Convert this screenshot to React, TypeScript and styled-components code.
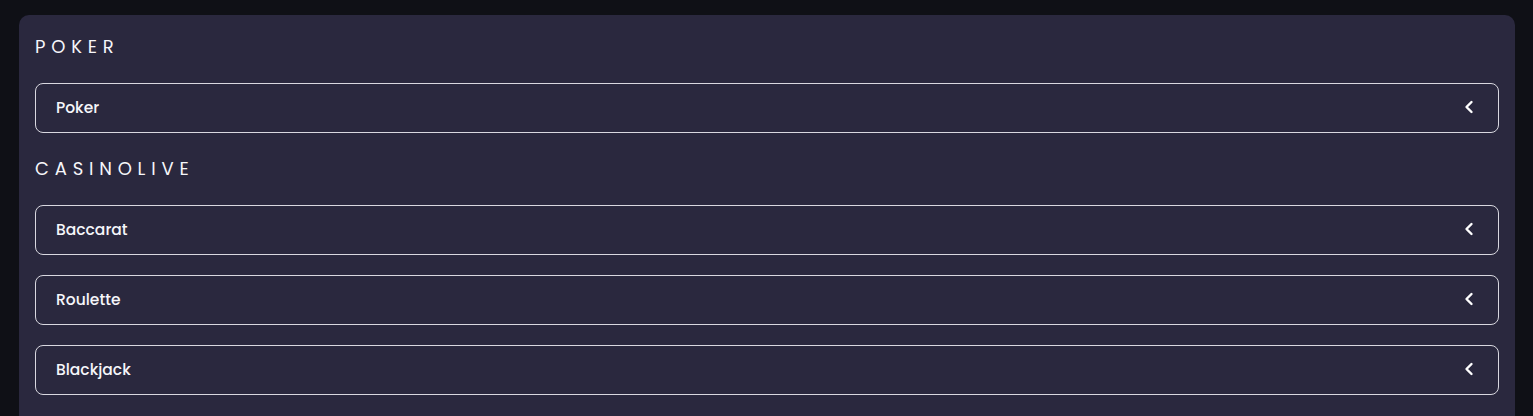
import React from 'react'
import styled, { createGlobalStyle } from 'styled-components'

const GlobalStyle = createGlobalStyle`
  html, body {
    margin: 0;
    padding: 0;
    background: #0f1016;
    font-family: Poppins, Inter, "Noto Sans", sans-serif;
    color: #ffffff;
  }
`

const Page = styled.div`
  padding: 15px 18px 0 19px;
  height: 416px;
  box-sizing: border-box;
  overflow: hidden;
`

const Card = styled.div`
  background: #2a283e;
  border-radius: 10px;
  padding: 21px 16px 40px 16px;
  display: flex;
  flex-direction: column;
`

const SectionTitle = styled.h2`
  margin: 0 0 25px 0;
  font-size: 18px;
  font-weight: 400;
  letter-spacing: 5.8px;
  line-height: 22px;
  text-transform: uppercase;
  color: #f6f6fa;
`

const List = styled.div`
  display: flex;
  flex-direction: column;
  gap: 20px;
  margin-bottom: 25px;
`

const Row = styled.button`
  height: 50px;
  box-sizing: border-box;
  border: 1px solid #d9d8e0;
  border-radius: 8px;
  background: transparent;
  color: #f6f6fa;
  display: flex;
  align-items: center;
  justify-content: space-between;
  padding: 0 24px 2px 20px;
  font-family: inherit;
  font-size: 15.5px;
  font-weight: 500;
  cursor: pointer;
  text-align: left;
`

const Chevron = () => (
  <svg width="10" height="14" viewBox="0 0 10 14" fill="none">
    <path d="M7.5 2 L2.5 7 L7.5 12" stroke="#ffffff" strokeWidth="2.4" strokeLinecap="round" strokeLinejoin="round" />
  </svg>
)

const sections = [
  { title: 'Poker', items: ['Poker'] },
  { title: 'Casinolive', items: ['Baccarat', 'Roulette', 'Blackjack'] },
]

const App = () => (
  <>
    <GlobalStyle />
    <Page>
      <Card>
        {sections.map((section) => (
          <div key={section.title}>
            <SectionTitle>{section.title}</SectionTitle>
            <List>
              {section.items.map((item) => (
                <Row key={item}>
                  {item}
                  <Chevron />
                </Row>
              ))}
            </List>
          </div>
        ))}
      </Card>
    </Page>
  </>
)

export default App
